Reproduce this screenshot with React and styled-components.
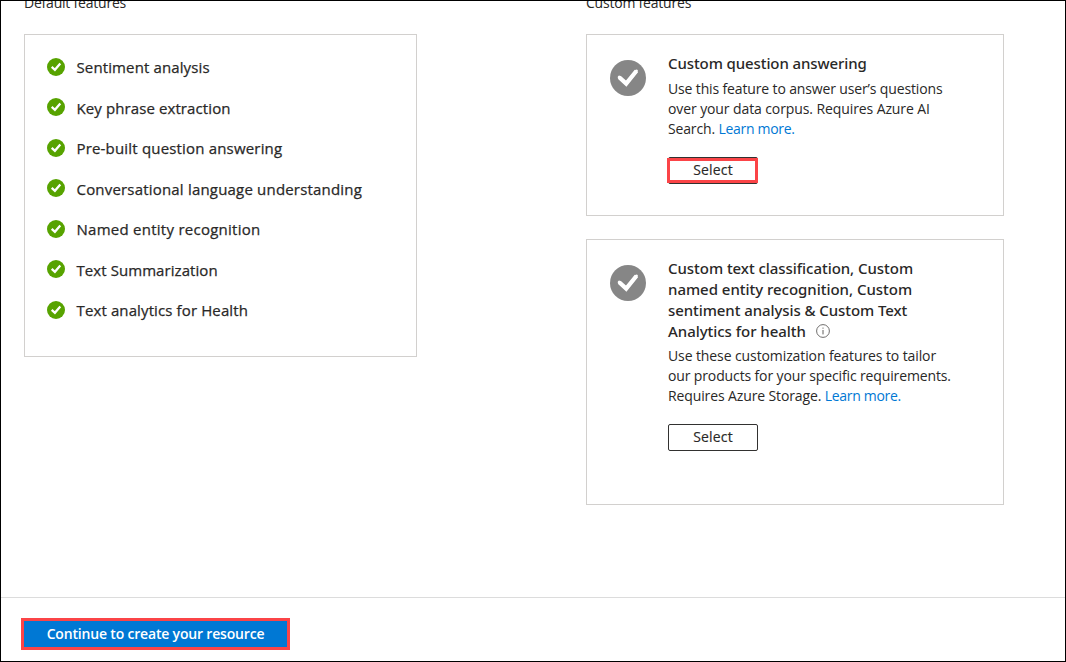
import React from "react";
import styled, { createGlobalStyle } from "styled-components";

const GlobalStyle = createGlobalStyle`
  *, *::before, *::after { box-sizing: border-box; }
  body {
    margin: 0;
    background: #fff;
    color: #292827;
    font: 400 14px/20px "Open Sans", "Noto Sans", sans-serif;
  }
`;

const Page = styled.div`
  display: flex;
  flex-direction: column;
  width: 1066px;
  height: 662px;
  border: 1px solid #000;
  overflow: hidden;
`;

const Content = styled.main`
  flex: 1;
  min-height: 0;
  display: flex;
  gap: 169px;
  padding: 0 23px;
  overflow: hidden;
`;

const Column = styled.section`
  width: ${(p) => p.$width}px;
  margin-top: -8px;
`;

const ColumnTitle = styled.h2`
  margin: 0 0 21px;
  font-size: 14px;
  font-weight: 400;
  line-height: 20px;
  letter-spacing: -0.21px;
`;

const Card = styled.div`
  border: 1px solid #d2d0ce;
`;

const FeatureList = styled.ul`
  list-style: none;
  margin: 0;
  padding: 12px 22px 25.5px;
`;

const Feature = styled.li`
  display: flex;
  align-items: center;
  gap: 11.5px;
  height: 40.5px;
  font-size: 15px;
  letter-spacing: ${(p) => p.$track}px;
  -webkit-text-stroke: 0.25px currentColor;
  white-space: nowrap;
`;

const FeatureIcon = styled.svg`
  flex: none;
  margin-bottom: 1px;
`;

const OptionCard = styled(Card)`
  display: flex;
  align-items: flex-start;
  gap: 22px;
  height: ${(p) => p.$height}px;
  padding: 18px 23px;
  & + & { margin-top: 23px; }
`;

const OptionIcon = styled.svg`
  flex: none;
  margin-top: 7px;
`;

const OptionBody = styled.div`
  flex: 1;
`;

const OptionTitle = styled.h3`
  margin: 0 0 ${(p) => p.$gap}px;
  font: 500 15px/21px "Noto Sans", sans-serif;
`;

const Description = styled.p`
  margin: 0 0 18px;
`;

const Line = styled.span`
  display: block;
  white-space: nowrap;
  letter-spacing: ${(p) => p.$track}px;
`;

const Link = styled.a`
  color: #0078d4;
  letter-spacing: -0.31px;
`;

const InfoIcon = styled.svg`
  margin-left: 10px;
  vertical-align: -1px;
`;

const SelectButton = styled.button`
  position: relative;
  display: block;
  width: 90px;
  height: 27px;
  padding: 0 0 1px;
  border: 1px solid #323130;
  border-radius: 2px;
  background: #fff;
  color: #292827;
  font: 400 14px/20px "Open Sans", sans-serif;
  letter-spacing: 0.18px;
  -webkit-text-stroke: 0.15px currentColor;
`;

const Highlight = styled.span`
  position: absolute;
  inset: 0 -1px 0 -2px;
  border: 3px solid #fb4447;
`;

const Footer = styled.footer`
  height: 64px;
  padding: 20px;
  border-top: 1px solid #dcdcdc;
`;

const PrimaryButton = styled.button`
  display: block;
  width: 269px;
  height: 32px;
  padding: 0;
  border: 3px solid #fb4447;
  background: #0078d4;
  color: #fff;
  font: 600 14px/20px "Open Sans", sans-serif;
  letter-spacing: -0.18px;
`;

const features = [
  { name: "Sentiment analysis", track: 0.12 },
  { name: "Key phrase extraction", track: 0.1 },
  { name: "Pre-built question answering", track: 0.18 },
  { name: "Conversational language understanding", track: 0.19 },
  { name: "Named entity recognition", track: 0.26 },
  { name: "Text Summarization", track: 0.07 },
  { name: "Text analytics for Health", track: 0.12 },
];

const Check = () => (
  <FeatureIcon width="18" height="18" viewBox="0 0 18 18">
    <circle cx="9" cy="9" r="9" fill="#57a300" />
    <path d="M4.7 8.9 7.9 11.8 13.3 5.6" fill="none" stroke="#fff" strokeWidth="2.3" />
  </FeatureIcon>
);

const GreyCheck = () => (
  <OptionIcon width="36" height="36" viewBox="0 0 36 36">
    <circle cx="18" cy="18" r="18" fill="#868686" />
    <path d="M9.2 17.2 16.2 23.6 26.4 11" fill="none" stroke="#fff" strokeWidth="4.2" />
    <path d="M9.2 17.2 16.2 23.6 26.4 11" fill="none" stroke="#fff" strokeWidth="3" strokeLinecap="round" />
  </OptionIcon>
);

const Info = () => (
  <InfoIcon width="14" height="14" viewBox="0 0 14 14" fill="none" stroke="#605e5c">
    <circle cx="7" cy="7" r="6.4" strokeWidth="0.9" />
    <path d="M7 6v4.4M7 3.6v1.1" strokeWidth="1" />
  </InfoIcon>
);

export default function App() {
  return (
    <>
      <GlobalStyle />
      <Page>
        <Content>
          <Column $width={393}>
            <ColumnTitle>Default features</ColumnTitle>
            <Card>
              <FeatureList>
                {features.map((f) => (
                  <Feature key={f.name} $track={f.track}>
                    <Check />
                    {f.name}
                  </Feature>
                ))}
              </FeatureList>
            </Card>
          </Column>
          <Column $width={418}>
            <ColumnTitle>Custom features</ColumnTitle>
            <OptionCard $height={182}>
              <GreyCheck />
              <OptionBody>
                <OptionTitle $gap={5}>
                  <Line $track={-0.1}>Custom question answering</Line>
                </OptionTitle>
                <Description>
                  <Line $track={-0.14}>Use this feature to answer user’s questions</Line>
                  <Line $track={-0.1}>over your data corpus. Requires Azure AI</Line>
                  <Line $track={-0.15}>Search. <Link>Learn more.</Link></Line>
                </Description>
                <SelectButton>Select<Highlight /></SelectButton>
              </OptionBody>
            </OptionCard>
            <OptionCard $height={266}>
              <GreyCheck />
              <OptionBody>
                <OptionTitle $gap={4}>
                  <Line $track={-0.05}>Custom text classification, Custom</Line>
                  <Line $track={-0.03}>named entity recognition, Custom</Line>
                  <Line $track={-0.08}>sentiment analysis &amp; Custom Text</Line>
                  <Line $track={-0.04}>Analytics for health<Info /></Line>
                </OptionTitle>
                <Description>
                  <Line $track={-0.1}>Use these customization features to tailor</Line>
                  <Line $track={-0.13}>our products for your specific requirements.</Line>
                  <Line $track={-0.12}>Requires Azure Storage. <Link>Learn more.</Link></Line>
                </Description>
                <SelectButton>Select</SelectButton>
              </OptionBody>
            </OptionCard>
          </Column>
        </Content>
        <Footer>
          <PrimaryButton>Continue to create your resource</PrimaryButton>
        </Footer>
      </Page>
    </>
  );
}
